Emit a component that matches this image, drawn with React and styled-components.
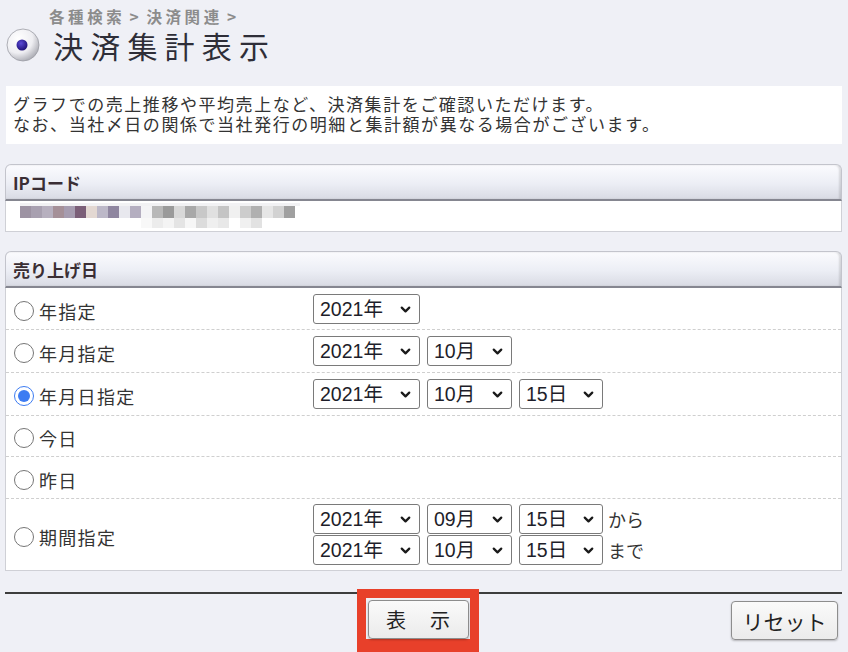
import React from 'react';
import styled, { createGlobalStyle } from 'styled-components';
import { ChevronDown } from 'lucide-react';

const GlobalStyle = createGlobalStyle`
  body {
    margin: 0;
    background: #eff0f6;
    font-family: "Noto Sans CJK JP", "Liberation Sans", sans-serif;
    color: #333;
  }
`;

const Page = styled.div`
  width: 837px;
  padding: 0 6px 0 5px;
  box-sizing: content-box;
`;

const Header = styled.div`
  display: flex;
  align-items: flex-end;
  gap: 13px;
  padding: 6px 0 0 1px;
  height: 62px;
  box-sizing: border-box;
`;

const Heading = styled.div`
  display: flex;
  flex-direction: column;
  gap: 3px;
`;

const Crumb = styled.div`
  font-size: 15.5px;
  font-weight: bold;
  color: #8c8c8c;
  line-height: 17px;
  margin-left: -4px;
  letter-spacing: 3.6px;
  word-spacing: -3px;
`;

const Title = styled.h1`
  margin: 0;
  font-size: 30px;
  font-weight: normal;
  letter-spacing: 7.2px;
  line-height: 34px;
  color: #2e2e38;
`;

const Intro = styled.div`
  margin: 24px 0 0 1px;
  background: #fff;
  padding: 8px 7px 10px;
  font-size: 17px;
  line-height: 20px;
  letter-spacing: 1.55px;
  color: #333;
`;

const Panel = styled.section`
  margin-top: ${({ $gap }) => $gap}px;
`;

const PanelHead = styled.div`
  height: 37px;
  box-sizing: border-box;
  display: flex;
  align-items: center;
  padding-left: 7px;
  font-size: 17px;
  font-weight: bold;
  color: #3a2e34;
  background: linear-gradient(#fbfbfe, #eceef5 55%, #d9dbe4);
  border: 1px solid #c3c4cc;
  border-bottom: 2px solid #858690;
  border-radius: 6px 6px 0 0;
  box-shadow: inset -2px 0 2px rgba(0, 0, 0, 0.12);
`;

const PanelBody = styled.div`
  background: #fff;
  border: 1px solid #cfd0d6;
  border-top: none;
`;

const Mosaic = styled.div`
  height: 30px;
  display: flex;
  align-items: center;
  padding-left: 14px;
`;

const Row = styled.div`
  display: grid;
  grid-template-columns: 307px 1fr;
  align-items: center;
  min-height: ${({ $h }) => $h}px;
  border-bottom: 1px dashed #cfcfcf;
  &:last-child {
    border-bottom: none;
  }
`;

const Choice = styled.label`
  display: flex;
  align-items: center;
  gap: 5px;
  padding-left: 8px;
  font-size: 18px;
  letter-spacing: 1.3px;
  color: #333;
  margin-top: 4px;
`;

const Radio = styled.input`
  width: 20px;
  height: 20px;
  margin: 0;
  accent-color: #3d7cf2;
`;

const Pickers = styled.div`
  display: flex;
  flex-direction: column;
  gap: 1px;
`;

const PickLine = styled.div`
  display: flex;
  align-items: center;
  gap: 7px;
`;

const SelectWrap = styled.span`
  position: relative;
  display: inline-flex;
  color: #1a1a1a;
  & > svg {
    position: absolute;
    right: 7px;
    top: 8px;
    pointer-events: none;
  }
`;

const Select = styled.select`
  appearance: none;
  width: ${({ $w }) => $w}px;
  height: 30px;
  font-family: "Liberation Sans", "Noto Sans CJK JP", sans-serif;
  font-size: 19.5px;
  color: #1e1e2a;
  border: 1.5px solid #7a7a7a;
  border-radius: 3px;
  background: #fff;
  padding: 0 2px 0 6px;
`;

const Suffix = styled.span`
  font-size: 18px;
  color: #333;
  margin-left: -2px;
`;

const Footer = styled.div`
  margin-top: 21px;
  border-top: 2px solid #3d3d3d;
  display: grid;
  grid-template-columns: 1fr auto 1fr;
  align-items: start;
`;

const Highlight = styled.div`
  grid-column: 2;
  margin: -5px 12px 0 0;
  border: 9px solid #e8402a;
  border-bottom-width: 20px;
  padding: 2px 1px 0 2px;
`;

const Button = styled.button`
  font-family: "Noto Sans CJK JP", sans-serif;
  font-size: ${({ $size }) => $size}px;
  color: #222;
  height: 39px;
  width: ${({ $w }) => $w}px;
  padding: 0;
  letter-spacing: ${({ $spread }) => $spread}px;
  text-indent: ${({ $spread }) => $spread}px;
  background: linear-gradient(#fafafa, #ebebeb);
  border: 1.5px solid #8d8d8d;
  border-radius: 4px;
  box-shadow: 0 1px 2px rgba(0, 0, 0, 0.25);
`;

const ResetSlot = styled.div`
  grid-column: 3;
  display: flex;
  justify-content: flex-end;
  padding: 7px 4px 0 0;
`;

const years = ['2020年', '2021年', '2022年'];
const months = Array.from({ length: 12 }, (_, i) => String(i + 1).padStart(2, '0') + '月');
const days = Array.from({ length: 31 }, (_, i) => String(i + 1).padStart(2, '0') + '日');

const Picker = ({ w, value, options }) => (
  <SelectWrap>
    <Select $w={w} defaultValue={value}>
      {options.map((o) => <option key={o}>{o}</option>)}
    </Select>
    <ChevronDown size={15} strokeWidth={3.6} />
  </SelectWrap>
);

const DateLine = ({ parts, month = '10月', suffix }) => (
  <PickLine>
    <Picker w={107} value="2021年" options={years} />
    {parts >= 2 && <Picker w={85} value={month} options={months} />}
    {parts >= 3 && <Picker w={84} value="15日" options={days} />}
    {suffix && <Suffix>{suffix}</Suffix>}
  </PickLine>
);

const Range = () => (
  <Pickers>
    <DateLine parts={3} month="09月" suffix="から" />
    <DateLine parts={3} month="10月" suffix="まで" />
  </Pickers>
);

const mosaicTop = ['#9d93a3', '#a8a0b0', '#b7b0bf', '#a59098', '#a69cb0', '#7b5f78', '#e3d8d2', '#bcb8c8', '#8f86a0', '#e8e8ee', '#b4aec0', '#f4f4f6', '#b8b8b8', '#9a9a9a', '#d8d8d8', '#a8a8a8', '#c8c8c8', '#e0e0e0', '#c4c4c4', '#f0f0f0', '#cccccc', '#b0b0b0', '#e6e6e6', '#d2d2d2', '#a0a0a0'];
const mosaicBot = ['#fff', '#fff', '#fff', '#fff', '#fff', '#fff', '#fff', '#fff', '#fff', '#fff', '#fff', '#f8f8f8', '#ececec', '#f4f4f4', '#e4e4e4', '#f6f6f6', '#dcdcdc', '#efefef', '#e8e8e8', '#fff', '#f0f0f0', '#e2e2e2', '#fff', '#fff', '#fff'];

const Redacted = () => (
  <svg width="280" height="26" viewBox="0 0 280 26">
    <rect x="0" y="0" width="280" height="3" fill="#f2f2f4" />
    {mosaicTop.map((c, i) => <rect key={'t' + i} x={i * 11} y="3" width="11" height="12" fill={c} />)}
    {mosaicBot.map((c, i) => <rect key={'b' + i} x={i * 11} y="15" width="11" height="10" fill={c} />)}
  </svg>
);

const BallIcon = () => (
  <svg width="34" height="34" viewBox="0 0 34 34">
    <defs>
      <radialGradient id="ball" cx="0.35" cy="0.3" r="0.75">
        <stop offset="0" stopColor="#ffffff" />
        <stop offset="0.6" stopColor="#eeeef2" />
        <stop offset="1" stopColor="#a9aab2" />
      </radialGradient>
      <radialGradient id="dot" cx="0.4" cy="0.35" r="0.7">
        <stop offset="0" stopColor="#5a4ad6" />
        <stop offset="1" stopColor="#1c0e72" />
      </radialGradient>
    </defs>
    <circle cx="17" cy="17" r="16" fill="url(#ball)" stroke="#9c9da5" strokeWidth="0.8" />
    <circle cx="16" cy="17" r="5.5" fill="url(#dot)" />
  </svg>
);

const options = [
  { id: 'y', label: '年指定', h: 41, picker: <DateLine parts={1} /> },
  { id: 'ym', label: '年月指定', h: 42, picker: <DateLine parts={2} /> },
  { id: 'ymd', label: '年月日指定', h: 42, picker: <DateLine parts={3} />, checked: true },
  { id: 'today', label: '今日', h: 40 },
  { id: 'yday', label: '昨日', h: 41 },
  { id: 'range', label: '期間指定', h: 71, picker: <Range /> },
];

const App = () => {
  return (
    <Page>
      <GlobalStyle />
      <Header>
        <BallIcon />
        <Heading>
          <Crumb>各種検索 &gt; 決済関連 &gt;</Crumb>
          <Title>決済集計表示</Title>
        </Heading>
      </Header>

      <Intro>
        グラフでの売上推移や平均売上など、決済集計をご確認いただけます。<br />
        なお、当社〆日の関係で当社発行の明細と集計額が異なる場合がございます。
      </Intro>

      <Panel $gap={20}>
        <PanelHead>IPコード</PanelHead>
        <PanelBody>
          <Mosaic><Redacted /></Mosaic>
        </PanelBody>
      </Panel>

      <Panel $gap={19}>
        <PanelHead>売り上げ日</PanelHead>
        <PanelBody>
          {options.map((o) => (
            <Row key={o.id} $h={o.h}>
              <Choice>
                <Radio type="radio" name="period" defaultChecked={o.checked} />
                {o.label}
              </Choice>
              <div>{o.picker}</div>
            </Row>
          ))}
        </PanelBody>
      </Panel>

      <Footer>
        <Highlight>
          <Button $w={101} $size={20} $spread={2}>表　示</Button>
        </Highlight>
        <ResetSlot>
          <Button $w={107} $size={21} $spread={0}>リセット</Button>
        </ResetSlot>
      </Footer>
    </Page>
  );
};

export default App;
